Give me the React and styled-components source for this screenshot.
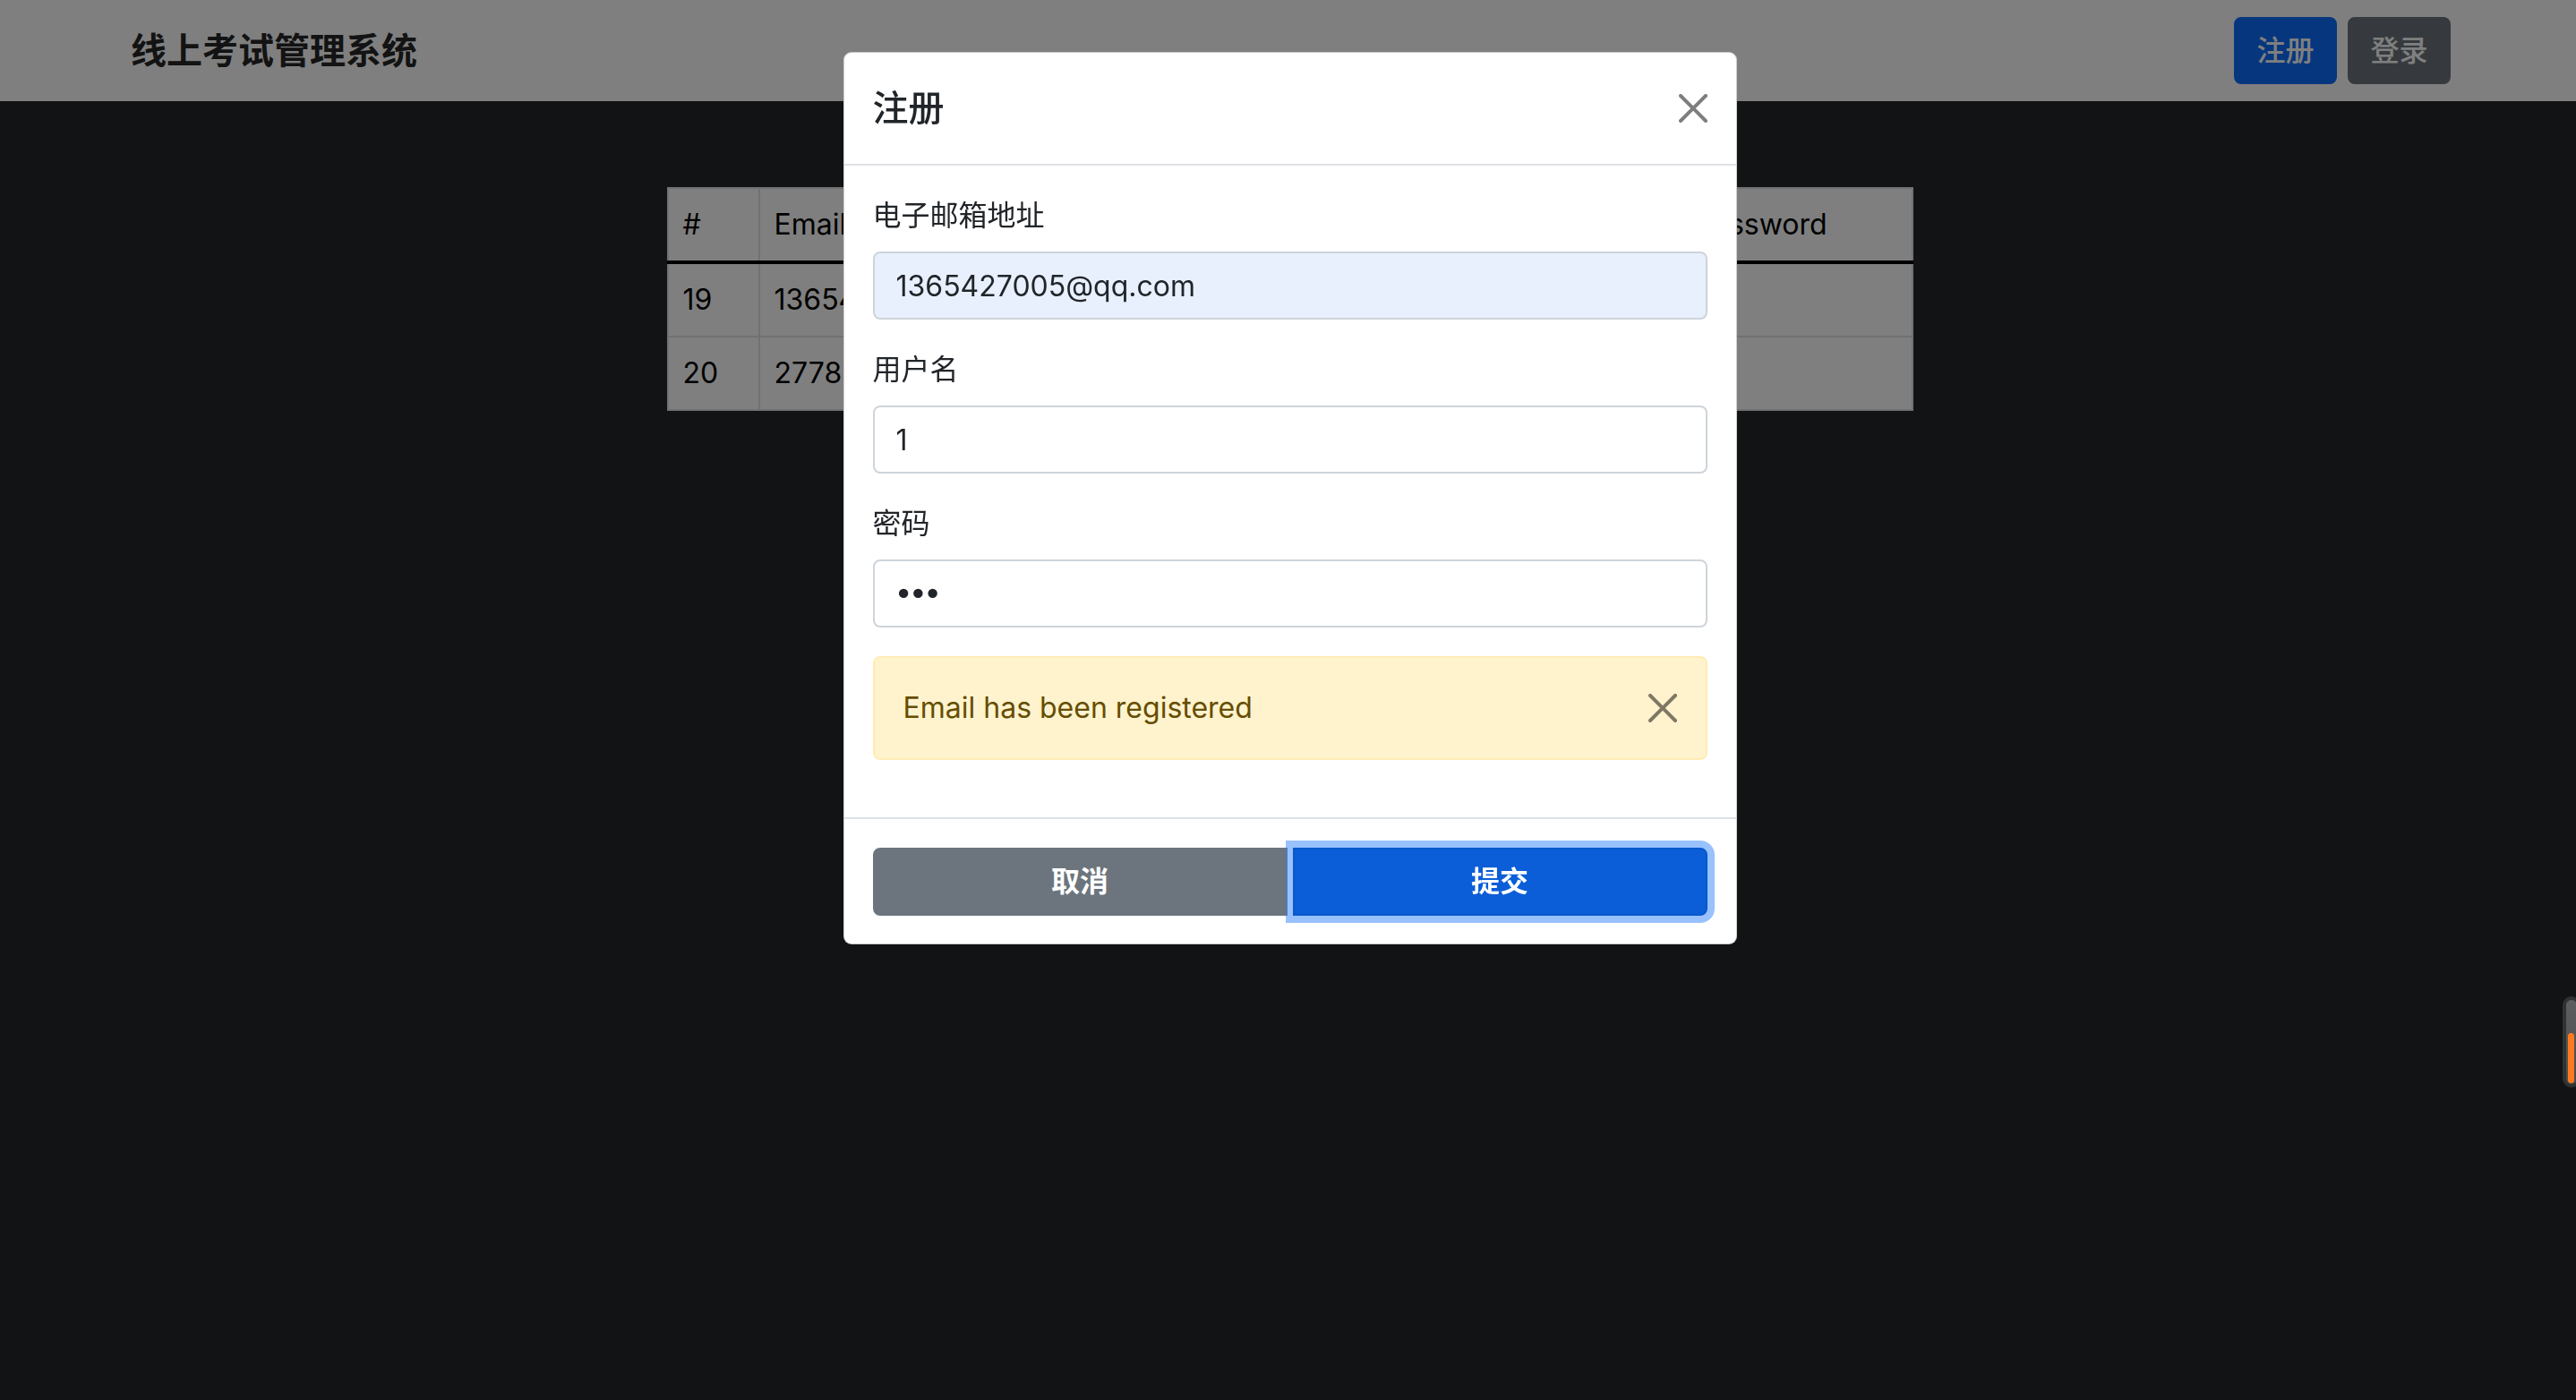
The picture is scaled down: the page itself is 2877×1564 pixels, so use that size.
import React from "react";
import styled, { createGlobalStyle } from "styled-components";

const GlobalStyle = createGlobalStyle`
  html, body {
    margin: 0;
    padding: 0;
    background: #252729;
    font-family: Inter, "Noto Sans CJK SC", sans-serif;
    color: #212529;
  }
  * { box-sizing: border-box; }
`;

const Page = styled.div`
  min-height: 100vh;
`;

const Navbar = styled.header`
  height: 113px;
  background: #ffffff;
  display: flex;
  align-items: center;
  justify-content: space-between;
  padding: 0 140px 0 146px;
`;

const Brand = styled.div`
  font-size: 40px;
  line-height: 60px;
  font-weight: 600;
  color: #262626;
`;

const NavActions = styled.div`
  display: flex;
  gap: 12px;
`;

const NavButton = styled.button`
  width: 115px;
  height: 75px;
  border-radius: 8px;
  border: 2px solid ${(p) => (p.$variant === "primary" ? "#0d6efd" : "#6c757d")};
  background: ${(p) => (p.$variant === "primary" ? "#0d6efd" : "#6c757d")};
  color: #ffffff;
  font-family: inherit;
  font-size: 32px;
  line-height: 48px;
  font-weight: 500;
  padding: 0;
`;

const Main = styled.main`
  padding-top: 96px;
  display: flex;
  justify-content: center;
  padding-left: 4px;
`;

const Table = styled.table`
  width: 1390px;
  border-collapse: collapse;
  table-layout: fixed;
  background: #ffffff;
  color: #000000;
  font-size: 32px;
  line-height: 48px;
`;

const HeadCell = styled.th`
  text-align: left;
  font-weight: 400;
  padding: 16px;
  border: 2px solid #dee2e6;
  border-bottom: 4px solid #000000;
`;

const Cell = styled.td`
  padding: 16px;
  border: 2px solid #dee2e6;
  white-space: nowrap;
  overflow: hidden;
`;

const Backdrop = styled.div`
  position: fixed;
  inset: 0;
  background: rgba(0, 0, 0, 0.5);
`;

const ModalLayer = styled.div`
  position: fixed;
  inset: 0;
  display: flex;
  justify-content: center;
  align-items: flex-start;
  padding: 58px 0 0 4px;
`;

const Modal = styled.div`
  width: 998px;
  background: #ffffff;
  border: 1px solid rgba(0, 0, 0, 0.2);
  border-radius: 9px;
  overflow: hidden;
`;

const ModalHeader = styled.div`
  display: flex;
  align-items: center;
  justify-content: space-between;
  padding: 32px;
  border-bottom: 2px solid #dee2e6;
`;

const ModalTitle = styled.h5`
  margin: 0;
  font-size: 40px;
  line-height: 60px;
  font-weight: 500;
  color: #212529;
`;

const CloseButton = styled.button`
  width: 64px;
  height: 64px;
  padding: 16px;
  margin: -16px -16px -16px auto;
  border: 0;
  background: transparent;
  display: flex;
  align-items: center;
  justify-content: center;
  opacity: 0.5;
  svg { display: block; }
`;

const AlertClose = styled(CloseButton)`
  position: absolute;
  top: 0;
  right: 0;
  width: auto;
  height: auto;
  margin: 0;
  padding: 40px 32px;
`;

const ModalBody = styled.div`
  padding: 32px;
`;

const FormGroup = styled.div`
  margin-bottom: 32px;
`;

const Label = styled.label`
  display: block;
  font-size: 32px;
  line-height: 48px;
  margin-bottom: 16px;
  color: #212529;
`;

const Input = styled.input`
  display: block;
  width: 100%;
  height: 76px;
  padding: 12px 24px;
  font-family: inherit;
  font-size: 32px;
  line-height: 48px;
  color: #212529;
  background: ${(p) => (p.$autofill ? "#e8f0fe" : "#ffffff")};
  border: 2px solid #ced4da;
  border-radius: 8px;
  outline: none;
`;

const PasswordInput = styled(Input)`
  font-family: "DejaVu Sans", sans-serif;
  font-size: 36px;
  letter-spacing: -5px;
  padding-left: 22px;
`;

const Alert = styled.div`
  position: relative;
  margin-bottom: 32px;
  padding: 32px 96px 32px 32px;
  background: #fff3cd;
  border: 2px solid #ffecb5;
  border-radius: 8px;
  color: #664d03;
  font-size: 32px;
  line-height: 48px;
`;

const ModalFooter = styled.div`
  display: grid;
  grid-template-columns: 1fr 1fr;
  column-gap: 6px;
  padding: 32px 32px 31px;
  border-top: 2px solid #dee2e6;
`;

const FooterButton = styled.button`
  position: relative;
  height: 76px;
  padding: 0;
  font-family: inherit;
  font-size: 32px;
  line-height: 48px;
  font-weight: 600;
  color: #ffffff;
  border: 2px solid ${(p) => (p.$primary ? "#0a58ca" : "#6c757d")};
  background: ${(p) => (p.$primary ? "#0b5ed7" : "#6c757d")};
  border-radius: ${(p) => (p.$primary ? "0 8px 8px 0" : "8px 0 0 8px")};
  box-shadow: ${(p) => (p.$primary ? "0 0 0 8px rgba(49, 132, 253, 0.5)" : "none")};
  z-index: ${(p) => (p.$primary ? 1 : 0)};
`;

const ScrollPill = styled.div`
  position: fixed;
  left: 2862px;
  top: 1113px;
  width: 20px;
  height: 102px;
  border-radius: 10px;
  background: #303132;
  padding: 4px;
`;

const ScrollTrack = styled.div`
  position: relative;
  height: 100%;
  border-radius: 7px;
  background: linear-gradient(#5d5e5f, #4a4b4c);
`;

const ScrollFill = styled.div`
  position: absolute;
  left: 2px;
  width: 7px;
  bottom: 1px;
  height: 56px;
  border-radius: 4px;
  background: #ff7a1f;
`;

const CloseIcon = () => (
  <svg width="32" height="32" viewBox="0 0 16 16" fill="#000">
    <path d="M.293.293a1 1 0 0 1 1.414 0L8 6.586 14.293.293a1 1 0 1 1 1.414 1.414L9.414 8l6.293 6.293a1 1 0 0 1-1.414 1.414L8 9.414l-6.293 6.293a1 1 0 0 1-1.414-1.414L6.586 8 .293 1.707a1 1 0 0 1 0-1.414z" />
  </svg>
);

const users = [
  { id: 19, email: "1365427005@qq.com", name: "1", password: "" },
  { id: 20, email: "2778341955@qq.com", name: "2", password: "" },
];

export default function App() {
  return (
    <>
      <GlobalStyle />
      <Page>
        <Navbar>
          <Brand>线上考试管理系统</Brand>
          <NavActions>
            <NavButton $variant="primary">注册</NavButton>
            <NavButton $variant="secondary">登录</NavButton>
          </NavActions>
        </Navbar>
        <Main>
          <Table>
            <colgroup>
              <col style={{ width: 102 }} />
              <col style={{ width: 700 }} />
              <col style={{ width: 328 }} />
              <col style={{ width: 260 }} />
            </colgroup>
            <thead>
              <tr>
                <HeadCell>#</HeadCell>
                <HeadCell>Email</HeadCell>
                <HeadCell>Username</HeadCell>
                <HeadCell>Password</HeadCell>
              </tr>
            </thead>
            <tbody>
              {users.map((u) => (
                <tr key={u.id}>
                  <Cell>{u.id}</Cell>
                  <Cell>{u.email}</Cell>
                  <Cell>{u.name}</Cell>
                  <Cell>{u.password}</Cell>
                </tr>
              ))}
            </tbody>
          </Table>
        </Main>
      </Page>
      <Backdrop />
      <ModalLayer>
        <Modal>
          <ModalHeader>
            <ModalTitle>注册</ModalTitle>
            <CloseButton aria-label="Close">
              <CloseIcon />
            </CloseButton>
          </ModalHeader>
          <ModalBody>
            <FormGroup>
              <Label>电子邮箱地址</Label>
              <Input $autofill type="email" value="1365427005@qq.com" readOnly />
            </FormGroup>
            <FormGroup>
              <Label>用户名</Label>
              <Input type="text" value="1" readOnly />
            </FormGroup>
            <FormGroup>
              <Label>密码</Label>
              <PasswordInput type="password" value="123" readOnly />
            </FormGroup>
            <Alert>
              Email has been registered
              <AlertClose aria-label="Close">
                <CloseIcon />
              </AlertClose>
            </Alert>
          </ModalBody>
          <ModalFooter>
            <FooterButton>取消</FooterButton>
            <FooterButton $primary>提交</FooterButton>
          </ModalFooter>
        </Modal>
      </ModalLayer>
      <ScrollPill>
        <ScrollTrack>
          <ScrollFill />
        </ScrollTrack>
      </ScrollPill>
    </>
  );
}
